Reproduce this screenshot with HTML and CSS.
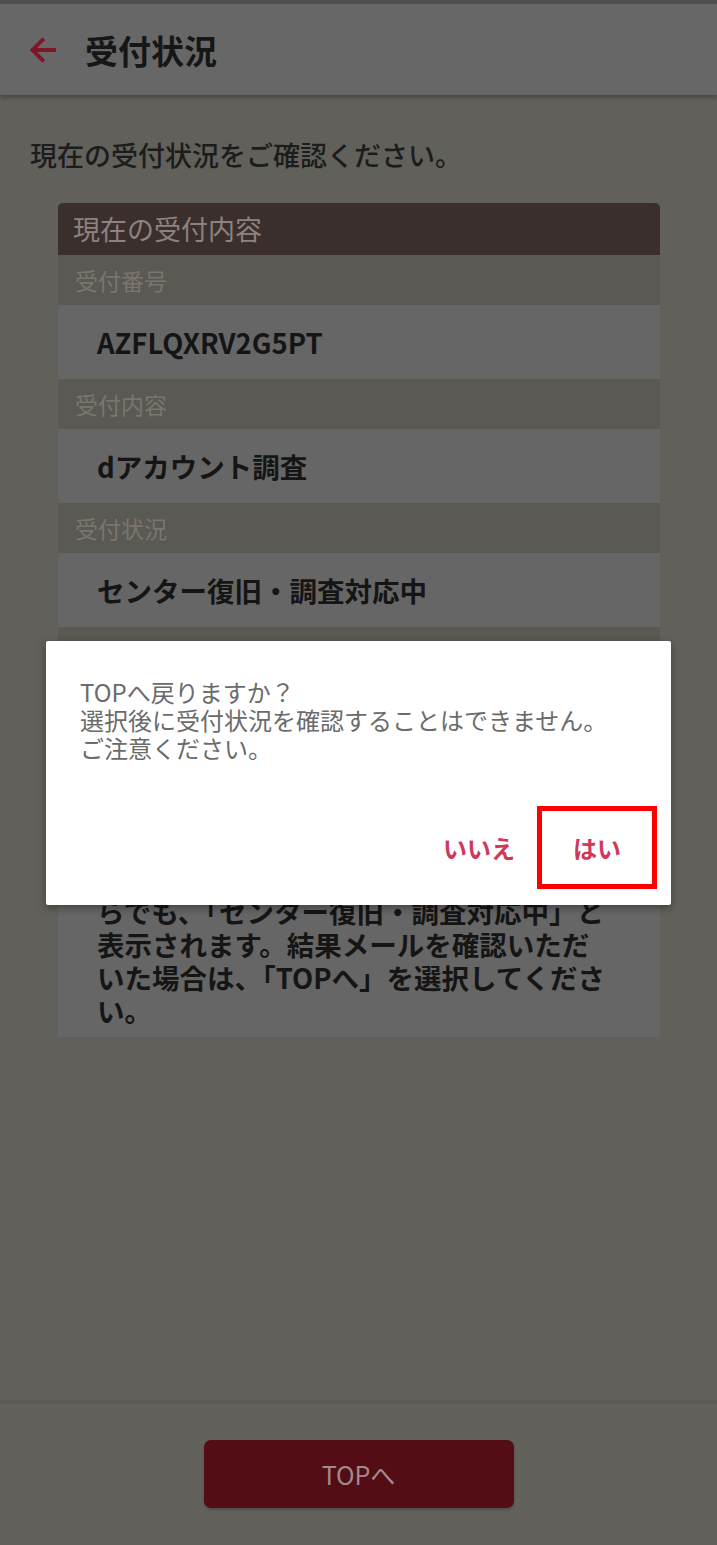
FILE: index.html
```html
<!DOCTYPE html>
<html lang="ja">
<head>
<meta charset="utf-8">
<title>受付状況</title>
<link rel="stylesheet" href="styles.css">
</head>
<body>
<div class="app">
  <div class="statusbar"></div>
  <header class="topbar">
    <svg class="back" viewBox="0 0 30 30" width="30" height="30" aria-hidden="true">
      <path d="M27 15H6M15.5 5L5.5 15l10 10" fill="none" stroke="currentColor" stroke-width="3.8" stroke-linecap="square"/>
    </svg>
    <h1 class="title">受付状況</h1>
  </header>
  <main class="content">
    <p class="intro">現在の受付状況をご確認ください。</p>
    <section class="card">
      <div class="card-head">現在の受付内容</div>
      <div class="label">受付番号</div>
      <div class="value">AZFLQXRV2G5PT</div>
      <div class="label">受付内容</div>
      <div class="value">dアカウント調査</div>
      <div class="label">受付状況</div>
      <div class="value">センター復旧・調査対応中</div>
      <div class="label label-empty"></div>
      <div class="note">らでも、「センター復旧・調査対応中」と<br>表示されます。結果メールを確認いただ<br>いた場合は、「TOPへ」を選択してくださ<br>い。</div>
    </section>
  </main>
  <footer class="footer">
    <button class="top-btn" type="button">TOPへ</button>
  </footer>

  <div class="dialog" role="dialog">
    <p class="dialog-text">TOPへ戻りますか？<br>選択後に受付状況を確認することはできません。<br>ご注意ください。</p>
    <div class="dialog-actions">
      <button class="dlg-btn" type="button">いいえ</button>
      <div class="highlight"><button class="dlg-btn" type="button">はい</button></div>
    </div>
  </div>
</div>
</body>
</html>
```
FILE: styles.css
```css
html, body {
  margin: 0;
  padding: 0;
}
body {
  width: 717px;
  height: 1545px;
  overflow: hidden;
  background: #62605a;
  font-family: "Noto Sans CJK JP", "Noto Sans", sans-serif;
}
.app {
  position: relative;
  width: 717px;
  height: 1545px;
  display: flex;
  flex-direction: column;
}
.statusbar {
  height: 4px;
  background: #4f4f4f;
}
.topbar {
  position: relative;
  z-index: 1;
  height: 91px;
  background: #676767;
  display: flex;
  align-items: center;
  padding-left: 27px;
  box-shadow: 0 3px 4px rgba(0, 0, 0, 0.25);
}
.back {
  color: #7d1626;
  display: block;
}
.title {
  margin: 0 0 0 28px;
  font-size: 33px;
  font-weight: 700;
  color: #161616;
  line-height: 40px;
}
.content {
  flex: 1;
  background: #62605a;
  padding-top: 40px;
}
.intro {
  margin: 0 0 28px 30px;
  font-size: 27px;
  line-height: 40px;
  color: #1c1c1c;
  font-weight: 500;
}
.card {
  margin: 0 57px 0 58px;
}
.card-head {
  height: 52px;
  background: #3a2f2d;
  border-radius: 5px 5px 0 0;
  color: #8d8280;
  font-size: 27px;
  line-height: 52px;
  padding-left: 15px;
}
.label {
  height: 50px;
  background: #5b5953;
  color: #7a766f;
  font-size: 23px;
  line-height: 50px;
  padding-left: 17px;
}
.value {
  height: 74px;
  background: #666666;
  color: #151515;
  font-size: 27.5px;
  font-weight: 700;
  line-height: 74px;
  padding-left: 39px;
  white-space: nowrap;
}
.note {
  background: #666666;
  color: #151515;
  font-size: 27.5px;
  font-weight: 700;
  line-height: 33px;
  padding: 218px 0 10px 39px;
  white-space: nowrap;
}
.footer {
  height: 145px;
  box-sizing: border-box;
  border-top: 4px solid #5c5b56;
  background: #63615c;
  display: flex;
  justify-content: center;
  padding-top: 36px;
}
.top-btn {
  width: 310px;
  height: 68px;
  border: 0;
  border-radius: 7px;
  background: #540c15;
  color: #9d8b8d;
  font-family: "Noto Sans CJK JP", "Noto Sans", sans-serif;
  font-size: 25px;
  padding: 0;
  box-shadow: 0 2px 3px rgba(0, 0, 0, 0.2);
}
.dialog {
  position: absolute;
  left: 46px;
  top: 641px;
  width: 625px;
  height: 264px;
  box-sizing: border-box;
  background: #ffffff;
  border-radius: 2px;
  box-shadow: 0 3px 8px rgba(0, 0, 0, 0.35);
  padding: 37px 14px 16px 34px;
  display: flex;
  flex-direction: column;
}
.dialog-text {
  margin: 0;
  font-size: 24px;
  line-height: 28px;
  color: #6b6b6b;
  flex: 1;
}
.dialog-actions {
  display: flex;
  justify-content: flex-end;
  align-items: center;
  gap: 14px;
}
.dlg-btn {
  border: 0;
  background: transparent;
  color: #d0385a;
  font-family: "Noto Sans CJK JP", "Noto Sans", sans-serif;
  font-size: 24px;
  font-weight: 700;
  padding: 0 8px;
  height: 73px;
}
.highlight {
  width: 120px;
  height: 83px;
  box-sizing: border-box;
  border: 5px solid #ff0000;
  display: flex;
  align-items: center;
  justify-content: center;
}
```
